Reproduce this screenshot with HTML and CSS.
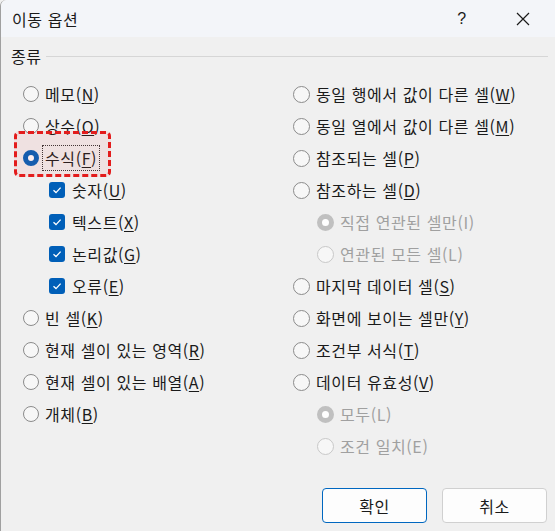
FILE: index.html
```html
<!DOCTYPE html>
<html lang="ko">
<head>
<meta charset="utf-8">
<link rel="stylesheet" href="styles.css">
</head>
<body>
<div class="dialog">
  <div class="titlebar">
    <span class="title">이동 옵션</span>
    <span class="help">?</span>
    <span class="close"><svg width="16" height="16" viewBox="0 0 16 16"><path d="M2 2 L14 14 M14 2 L2 14" stroke="#1a1a1a" stroke-width="1.2" fill="none"/></svg></span>
  </div>
  <div class="content">
    <div class="group-head"><span>종류</span><span class="rule"></span></div>
    <div class="columns">
      <div class="col left">
        <div class="row"><span class="radio"></span><span class="lbl">메모(<u>N</u>)</span></div>
        <div class="row"><span class="radio"></span><span class="lbl">상수(<u>O</u>)</span></div>
        <div class="row hl"><span class="radio on"></span><span class="lbl focus">수식(<u>F</u>)</span><span class="mark"></span></div>
        <div class="row ind"><span class="check"><svg width="16" height="16" viewBox="0 0 16 16"><path d="M4.5 8.3 L7 10.6 L11.6 5.6" stroke="#fff" stroke-width="1.3" fill="none"/></svg></span><span class="lbl">숫자(<u>U</u>)</span></div>
        <div class="row ind"><span class="check"><svg width="16" height="16" viewBox="0 0 16 16"><path d="M4.5 8.3 L7 10.6 L11.6 5.6" stroke="#fff" stroke-width="1.3" fill="none"/></svg></span><span class="lbl">텍스트(<u>X</u>)</span></div>
        <div class="row ind"><span class="check"><svg width="16" height="16" viewBox="0 0 16 16"><path d="M4.5 8.3 L7 10.6 L11.6 5.6" stroke="#fff" stroke-width="1.3" fill="none"/></svg></span><span class="lbl">논리값(<u>G</u>)</span></div>
        <div class="row ind"><span class="check"><svg width="16" height="16" viewBox="0 0 16 16"><path d="M4.5 8.3 L7 10.6 L11.6 5.6" stroke="#fff" stroke-width="1.3" fill="none"/></svg></span><span class="lbl">오류(<u>E</u>)</span></div>
        <div class="row"><span class="radio"></span><span class="lbl">빈 셀(<u>K</u>)</span></div>
        <div class="row"><span class="radio"></span><span class="lbl">현재 셀이 있는 영역(<u>R</u>)</span></div>
        <div class="row"><span class="radio"></span><span class="lbl">현재 셀이 있는 배열(<u>A</u>)</span></div>
        <div class="row"><span class="radio"></span><span class="lbl">개체(<u>B</u>)</span></div>
      </div>
      <div class="col right">
        <div class="row"><span class="radio"></span><span class="lbl">동일 행에서 값이 다른 셀(<u>W</u>)</span></div>
        <div class="row"><span class="radio"></span><span class="lbl">동일 열에서 값이 다른 셀(<u>M</u>)</span></div>
        <div class="row"><span class="radio"></span><span class="lbl">참조되는 셀(<u>P</u>)</span></div>
        <div class="row"><span class="radio"></span><span class="lbl">참조하는 셀(<u>D</u>)</span></div>
        <div class="row ind dis"><span class="radio on"></span><span class="lbl">직접 연관된 셀만(I)</span></div>
        <div class="row ind dis"><span class="radio"></span><span class="lbl">연관된 모든 셀(L)</span></div>
        <div class="row"><span class="radio"></span><span class="lbl">마지막 데이터 셀(<u>S</u>)</span></div>
        <div class="row"><span class="radio"></span><span class="lbl">화면에 보이는 셀만(<u>Y</u>)</span></div>
        <div class="row"><span class="radio"></span><span class="lbl">조건부 서식(<u>T</u>)</span></div>
        <div class="row"><span class="radio"></span><span class="lbl">데이터 유효성(<u>V</u>)</span></div>
        <div class="row ind dis"><span class="radio on"></span><span class="lbl">모두(L)</span></div>
        <div class="row ind dis"><span class="radio"></span><span class="lbl">조건 일치(E)</span></div>
      </div>
    </div>
    <div class="buttons">
      <button class="btn primary">확인</button>
      <button class="btn">취소</button>
    </div>
  </div>
</div>
</body>
</html>
```
FILE: styles.css
```css
html, body {
  margin: 0;
  padding: 0;
}
body {
  width: 555px;
  height: 531px;
  overflow: hidden;
  background: #f0f0f0;
  font-family: "Noto Sans CJK KR", "Noto Sans", sans-serif;
  font-size: 16px;
  letter-spacing: 0.6px;
  color: #1a1a1a;
}
.dialog {
  height: 531px;
  border-left: 1px solid #a0a0a0;
  border-top-left-radius: 6px;
  box-sizing: border-box;
  background: #f0f0f0;
}
.titlebar {
  height: 37px;
  display: flex;
  align-items: center;
  background: #f3f5f9;
  border-top-left-radius: 6px;
  padding-left: 11px;
}
.title {
  flex: 1;
}
.help {
  width: 20px;
  text-align: center;
  font-family: "Liberation Sans", sans-serif;
  font-size: 16px;
  margin-right: 43px;
}
.close {
  width: 16px;
  height: 16px;
  margin-right: 24px;
  display: flex;
}
.content {
  padding: 0 0 0 10px;
}
.group-head {
  display: flex;
  align-items: center;
  height: 41px;
  padding-bottom: 3px;
  box-sizing: border-box;
}
.group-head .rule {
  flex: 1;
  height: 1px;
  background: #d6d6d6;
  margin: 0 7px 0 4px;
}
.columns {
  display: flex;
}
.col.left {
  width: 270px;
  box-sizing: border-box;
  padding-left: 12px;
}
.col.right {
  flex: 1;
  padding-left: 12px;
}
.row {
  height: 32px;
  display: flex;
  align-items: center;
  position: relative;
}
.row.ind {
  padding-left: 26px;
}
.col.right .row.ind {
  padding-left: 24px;
}
.radio {
  width: 16px;
  height: 16px;
  border: 1px solid #8b8b8b;
  border-radius: 50%;
  box-sizing: border-box;
  margin-right: 6px;
  flex: none;
  background: #f7f7f7;
}
.col.right .radio {
  width: 17px;
  height: 17px;
}
.radio.on {
  border: 5px solid #005fb8;
  background: #fff;
}
.dis .radio {
  border-color: #c8c8c8;
  background: #f7f7f7;
}
.dis .radio.on {
  border: 5px solid #c0c0c0;
  background: #fff;
}
.dis .lbl {
  color: #a0a0a0;
}
.check {
  width: 16px;
  height: 16px;
  background: #005fb8;
  border-radius: 3px;
  margin-right: 7px;
  display: flex;
  flex: none;
}
.lbl u {
  text-decoration-thickness: 1px;
  text-underline-offset: 2px;
}
.lbl.focus {
  outline: 1px dotted #333;
  outline-offset: 2px;
  line-height: 20px;
}
.row.hl .mark {
  position: absolute;
  left: -9px;
  top: -11px;
  width: 97px;
  height: 46px;
  border: 3px dashed #e31c1c;
  border-radius: 5px;
  background: rgba(230, 80, 80, 0.09);
  box-sizing: border-box;
}
.buttons {
  display: flex;
  justify-content: flex-end;
  gap: 15px;
  padding-right: 8px;
  margin-top: 26px;
}
.btn {
  width: 105px;
  height: 35px;
  border: 1px solid #d0d0d0;
  border-radius: 4px;
  background: #fdfdfd;
  font-family: "Noto Sans CJK KR", sans-serif;
  font-size: 16px;
  letter-spacing: 0.5px;
  color: #1a1a1a;
}
.btn.primary {
  border-color: #0067c0;
}
```
